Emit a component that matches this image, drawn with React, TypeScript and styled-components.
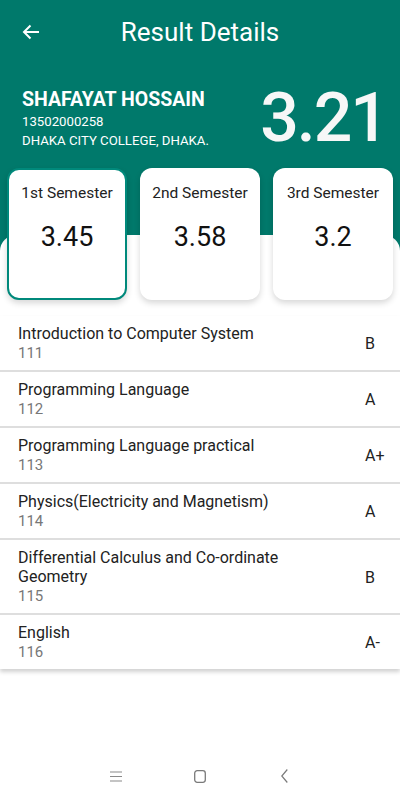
import React from 'react';
import styled, { createGlobalStyle } from 'styled-components';

const GlobalStyle = createGlobalStyle`
  * {
    box-sizing: border-box;
  }
  body {
    margin: 0;
    background: #fff;
    font-family: Roboto, 'Liberation Sans', sans-serif;
    color: #212121;
  }
`;

const Page = styled.div`
  min-height: 100vh;
  display: flex;
  flex-direction: column;
  background: #fff;
`;

const Header = styled.header`
  background-color: #00796b;
  color: #fff;
  padding-bottom: 94px;
`;

const TopBar = styled.div`
  height: 64px;
  display: flex;
  align-items: center;
  padding-left: 22px;
`;

const BackButton = styled.button`
  display: flex;
  align-items: center;
  width: 21px;
  height: 24px;
  padding: 0;
  border: 0;
  background: none;
  color: #fff;
`;

const Title = styled.h1`
  flex: 1;
  margin: 0;
  padding-right: 43px;
  text-align: center;
  font-size: 26px;
  font-weight: 400;
  line-height: 32px;
`;

const Profile = styled.div`
  display: flex;
  align-items: center;
  justify-content: space-between;
  padding: 16px 13px 0 22px;
`;

const Name = styled.h2`
  margin: 0;
  font-size: 19.5px;
  font-weight: 700;
  line-height: 24px;
`;

const Meta = styled.p`
  margin: 0;
  font-size: 13.2px;
  line-height: 19px;
`;

const Cgpa = styled.div`
  font-size: 68px;
  font-weight: 500;
  letter-spacing: -2px;
  line-height: 77px;
  color: #f7f7f7;
`;

const Sheet = styled.main`
  flex: 1;
  margin-top: -16px;
  background: #fff;
  border-radius: 16px 16px 0 0;
`;

const CardRow = styled.div`
  display: flex;
  gap: 13px;
  padding: 0 7px;
  margin-top: -67px;
`;

const SemesterCard = styled.div<{ $active?: boolean }>`
  flex: 1;
  height: 132px;
  padding-top: 12px;
  background: #fff;
  border-radius: 12px;
  border: 2px solid ${(p) => (p.$active ? '#00897b' : 'transparent')};
  box-shadow: 0 3px 6px rgba(0, 0, 0, 0.16);
  text-align: center;
`;

const CardLabel = styled.div`
  font-size: 15.5px;
  line-height: 22px;
  color: #222;
`;

const CardValue = styled.div`
  margin-top: 16px;
  font-size: 27px;
  line-height: 34px;
  color: #111;
`;

const SubjectList = styled.ul`
  list-style: none;
  margin: 16px 0 0;
  padding: 0;
  background: #fff;
  box-shadow: 0 3px 4px rgba(0, 0, 0, 0.18);
`;

const SubjectRow = styled.li`
  display: flex;
  align-items: center;
  padding: 8px 0 7px 18px;
  border-bottom: 2px solid #dedede;
  &:last-child {
    border-bottom: none;
  }
`;

const SubjectInfo = styled.div`
  flex: 1;
  min-width: 0;
  padding-right: 50px;
`;

const SubjectName = styled.div`
  font-size: 16px;
  line-height: 19px;
  color: #222;
`;

const SubjectCode = styled.div`
  font-size: 15px;
  line-height: 20px;
  color: #777;
`;

const Grade = styled.div`
  width: 35px;
  font-size: 16px;
  color: #222;
`;

const NavBar = styled.nav`
  height: 48px;
  display: flex;
  justify-content: center;
  align-items: center;
`;

const NavItem = styled.div`
  width: 84px;
  display: flex;
  justify-content: center;
  align-items: center;
`;

const semesters = [
  { label: '1st Semester', gpa: '3.45', active: true },
  { label: '2nd Semester', gpa: '3.58' },
  { label: '3rd Semester', gpa: '3.2' },
];

const subjects = [
  { name: 'Introduction to Computer System', code: '111', grade: 'B' },
  { name: 'Programming Language', code: '112', grade: 'A' },
  { name: 'Programming Language practical', code: '113', grade: 'A+' },
  { name: 'Physics(Electricity and Magnetism)', code: '114', grade: 'A' },
  { name: 'Differential Calculus and Co-ordinate Geometry', code: '115', grade: 'B' },
  { name: 'English', code: '116', grade: 'A-' },
];

const App: React.FC = () => {
  return (
    <Page>
      <GlobalStyle />
      <Header>
        <TopBar>
          <BackButton aria-label="back">
            <svg width="18" height="16" viewBox="0 0 18 16" fill="none" stroke="currentColor" strokeWidth="2">
              <path d="M17 8H2" />
              <path d="M8.5 1.5L2 8l6.5 6.5" />
            </svg>
          </BackButton>
          <Title>Result Details</Title>
        </TopBar>
        <Profile>
          <div>
            <Name>SHAFAYAT HOSSAIN</Name>
            <Meta>13502000258</Meta>
            <Meta>DHAKA CITY COLLEGE, DHAKA.</Meta>
          </div>
          <Cgpa>3.21</Cgpa>
        </Profile>
      </Header>
      <Sheet>
        <CardRow>
          {semesters.map((s) => (
            <SemesterCard key={s.label} $active={s.active}>
              <CardLabel>{s.label}</CardLabel>
              <CardValue>{s.gpa}</CardValue>
            </SemesterCard>
          ))}
        </CardRow>
        <SubjectList>
          {subjects.map((s) => (
            <SubjectRow key={s.code}>
              <SubjectInfo>
                <SubjectName>{s.name}</SubjectName>
                <SubjectCode>{s.code}</SubjectCode>
              </SubjectInfo>
              <Grade>{s.grade}</Grade>
            </SubjectRow>
          ))}
        </SubjectList>
      </Sheet>
      <NavBar>
        <NavItem>
          <svg width="12" height="11" viewBox="0 0 12 11" stroke="#8a8a8a" strokeWidth="1.2">
            <path d="M0 1h12M0 5.5h12M0 10h12" />
          </svg>
        </NavItem>
        <NavItem>
          <svg width="12" height="13" viewBox="0 0 12 13" fill="none" stroke="#7a7a7a" strokeWidth="1.3">
            <rect x="0.7" y="0.7" width="10.6" height="11.6" rx="2.5" />
          </svg>
        </NavItem>
        <NavItem>
          <svg width="7" height="14" viewBox="0 0 7 14" fill="none" stroke="#7a7a7a" strokeWidth="1.2">
            <path d="M6.3 0.5L0.8 7l5.5 6.5" />
          </svg>
        </NavItem>
      </NavBar>
    </Page>
  );
};

export default App;
